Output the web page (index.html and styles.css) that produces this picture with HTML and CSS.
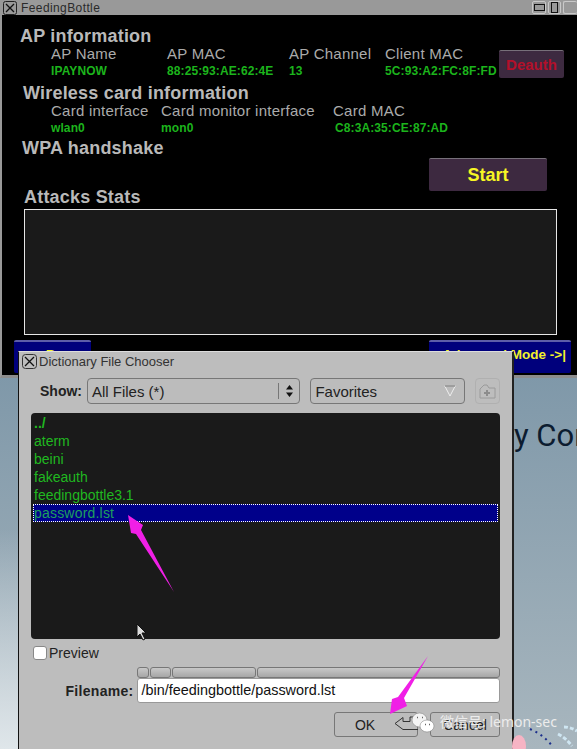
FILE: index.html
```html
<!DOCTYPE html>
<html lang="en">
<head>
    <meta charset="UTF-8">
    <meta name="viewport" content="width=device-width, initial-scale=1.0">
    <title>FeedingBottle</title>
    <link rel="stylesheet" href="styles.css">
</head>
<body>
    <div class="desktop">
        <div class="wallpaper-text">y Cor</div>

        <!-- Main window -->
        <div class="window main-window">
            <div class="titlebar">
                <svg class="close-icon" width="14" height="14" viewBox="0 0 14 14"><rect x="0.5" y="0.5" width="13" height="13" rx="2" fill="none" stroke="#222"/><path d="M3 3l8 8M11 3l-8 8" stroke="#111" stroke-width="1.3"/></svg>
                <span class="title-text">FeedingBottle</span>
                <div class="window-controls">
                    <span class="control"><i class="glyph-wide"></i></span>
                    <span class="control control-mid"><i class="glyph-tall"></i></span>
                    <span class="control control-cut"></span>
                </div>
            </div>
            <div class="main-body">
                <h2 class="heading heading-ap">AP information</h2>
                <div class="info-grid ap-grid">
                    <span class="label">AP Name</span>
                    <span class="label">AP MAC</span>
                    <span class="label">AP Channel</span>
                    <span class="label">Client MAC</span>
                    <span class="value">IPAYNOW</span>
                    <span class="value">88:25:93:AE:62:4E</span>
                    <span class="value">13</span>
                    <span class="value">5C:93:A2:FC:8F:FD</span>
                </div>
                <h2 class="heading heading-card">Wireless card information</h2>
                <div class="info-grid card-grid">
                    <span class="label">Card interface</span>
                    <span class="label">Card monitor interface</span>
                    <span class="label">Card MAC</span>
                    <span class="value">wlan0</span>
                    <span class="value">mon0</span>
                    <span class="value value-mac">C8:3A:35:CE:87:AD</span>
                </div>
                <h2 class="heading heading-wpa">WPA handshake</h2>
                <div class="start-row"><button class="btn-start">Start</button></div>
                <h2 class="heading heading-stats">Attacks Stats</h2>
                <div class="stats-box"></div>
                <div class="nav-row">
                    <button class="btn-nav btn-back">&lt;- Prev</button>
                    <button class="btn-nav btn-advanced">Advanced Mode -&gt;|</button>
                </div>
            </div>
            <button class="btn-deauth">Deauth</button>
        </div>

        <!-- File chooser dialog -->
        <div class="window dialog">
            <div class="dialog-title">
                <svg class="close-icon" width="15" height="15" viewBox="0 0 15 15"><rect x="0.5" y="0.5" width="14" height="14" rx="3" fill="none" stroke="#333"/><path d="M3 3l9 9M12 3l-9 9" stroke="#111" stroke-width="1.3"/></svg>
                <span>Dictionary File Chooser</span>
            </div>
            <div class="show-row">
                <label class="show-label">Show:</label>
                <div class="field select-files">
                    <span>All Files (*)</span>
                    <span class="spinner">
                        <svg width="9" height="14" viewBox="0 0 9 14"><path d="M4.5 1L8 5.500H1zM4.500 13L1 8.500h7z" fill="#111"/></svg>
                    </span>
                </div>
                <div class="field select-favorites">
                    <span>Favorites</span>
                    <svg width="12" height="12" viewBox="0 0 12 12"><path d="M0.800 1h10.400L6 11z" fill="none" stroke="#eee" stroke-width="1"/><path d="M1 1h10" stroke="#666"/></svg>
                </div>
                <div class="add-folder">
                    <svg width="17" height="15" viewBox="0 0 17 15"><path d="M1 14V5l4-4h3l2 3h6v10z" fill="none" stroke="#9a9a9a"/><path d="M5 9h6M8 6v6" stroke="#8c8c8c" stroke-width="2"/></svg>
                </div>
            </div>
            <ul class="file-list">
                <li class="parent">../</li>
                <li>aterm</li>
                <li>beini</li>
                <li>fakeauth</li>
                <li>feedingbottle3.1</li>
                <li class="selected">password.lst</li>
            </ul>
            <div class="preview-row">
                <span class="checkbox"></span>
                <span>Preview</span>
            </div>
            <div class="filename-row">
                <label class="filename-label">Filename:</label>
                <div class="filename-field">
                    <div class="path-buttons">
                        <span class="path-btn path-1"></span>
                        <span class="path-btn path-2"></span>
                        <span class="path-btn path-3"></span>
                        <span class="path-btn path-4"></span>
                    </div>
                    <div class="filename-input">/bin/feedingbottle/password.lst</div>
                </div>
            </div>
            <div class="button-row">
                <button class="btn-dialog btn-ok">OK
                    <svg class="return-icon" width="24" height="18" viewBox="0 0 24 18"><path d="M1 7.500L9 1.500V5.500H16V1H24M1 7.500L9 13.500H24" fill="none" stroke="#333"/></svg>
                </button>
                <button class="btn-dialog btn-cancel">Cancel</button>
            </div>
        </div>

        <!-- Annotations and corner artwork -->
        <svg class="overlay" width="577" height="749" viewBox="0 0 577 749">
            <path d="M128 515L143 525L141 530L174 592L136 534L131 533z" fill="#f01fe6"/>
            <path d="M428 656L404 698L407 706L390 714L392 699L398 697z" fill="#f01fe6"/>
            <path d="M137 624v13l3-3 3 6 2-1-3-6h4z" fill="#ddd" stroke="#111" stroke-width="1"/>
            <ellipse cx="519" cy="746" rx="7" ry="11" fill="#f6b4c4"/>
            <path d="M530 729q14 6 23 18" fill="none" stroke="#1c2f8c" stroke-width="2" stroke-dasharray="2 4"/>
            <path d="M558 734q8 4 14 12M564 727q6 0 13 4" fill="none" stroke="#cfe6f2" stroke-width="3" stroke-dasharray="4 2"/>
            <ellipse cx="419.500" cy="720" rx="7.500" ry="7" fill="#f4f4f4" stroke="#777" stroke-width="0.500"/>
            <ellipse cx="427" cy="726" rx="7" ry="6" fill="#fff" stroke="#777" stroke-width="0.500"/>
            <path d="M417 717.500h1M422 717.500h1M425 724.500h1M429 724.500h1" stroke="#666" stroke-width="1.500"/>
        </svg>
        <div class="watermark">微信号: lemon-sec</div>
    </div>
</body>
</html>
```

FILE: styles.css
```css
* {
    box-sizing: border-box;
}
body {
    margin: 0;
    font-family: "Liberation Sans", Arial, sans-serif;
}
button {
    font-family: inherit;
    padding: 0;
}
.desktop {
    position: relative;
    width: 577px;
    height: 749px;
    overflow: hidden;
    background: linear-gradient(180deg, #7f98a9 50%, #a8b6be 100%);
}
.desktop::before {
    content: "";
    position: absolute;
    left: 0;
    bottom: 0;
    width: 18px;
    height: 220px;
    background: linear-gradient(180deg, rgba(220, 230, 235, 0) 0%, #dfe6ea 100%);
}
.wallpaper-text {
    position: absolute;
    left: 514px;
    top: 416px;
    font-family: Roboto, sans-serif;
    font-size: 31px;
    line-height: 40px;
    color: #0c1c30;
    white-space: nowrap;
}
.window {
    position: absolute;
}

/* Main window */
.main-window {
    left: 0;
    top: 0;
    width: 577px;
    height: 378px;
    background: #000;
    border-left: 2px solid #999;
    border-bottom: 3px solid #8d8d8d;
}
.titlebar {
    display: flex;
    align-items: center;
    height: 15px;
    margin-left: -2px;
    padding-left: 3px;
    background: #999;
    color: #2a2a2a;
    font-size: 12px;
    letter-spacing: 0.4px;
}
.title-text {
    margin-left: 4px;
}
.window-controls {
    display: flex;
    gap: 2px;
    margin-left: auto;
}
.control {
    display: flex;
    align-items: center;
    justify-content: center;
    width: 14px;
    height: 13px;
    border: 1px solid #c9c9c9;
    border-radius: 2px;
}
.control-mid {
    width: 13px;
}
.control-cut {
    width: 14px;
    border-right: 0;
}
.glyph-wide {
    width: 11px;
    height: 7px;
    border: 1px solid #111;
}
.glyph-tall {
    width: 7px;
    height: 11px;
    border: 1px solid #111;
}
.main-body {
    padding: 11px 0 0 18px;
}
.heading {
    margin: 0;
    font-size: 18px;
    line-height: 20px;
    font-weight: bold;
    color: #b9b9b9;
    letter-spacing: 0.2px;
}
.heading-card {
    margin: 3px 0 0 3px;
}
.heading-wpa {
    margin: 2px 0 0 2px;
}
.heading-stats {
    margin: 0 0 0 4px;
}
.info-grid {
    display: grid;
    padding-left: 31px;
    grid-auto-rows: 18px;
    align-items: center;
}
.ap-grid {
    grid-template-columns: 116px 122px 96px auto;
    margin-top: -2px;
}
.card-grid {
    grid-template-columns: 110px 172px auto;
    grid-auto-rows: 17px;
    margin-top: -1px;
}
.label {
    font-size: 15px;
    letter-spacing: 0.25px;
    color: #ababab;
    white-space: nowrap;
}
.value {
    font-size: 12px;
    letter-spacing: 0.1px;
    font-weight: bold;
    color: #1cb41c;
    white-space: nowrap;
}
.value-mac {
    padding-left: 2px;
}
.start-row {
    display: flex;
    justify-content: flex-end;
    height: 29px;
    padding-right: 30px;
}
.btn-start {
    width: 118px;
    height: 33px;
    border: 0;
    border-top: 1px solid #77707a;
    border-radius: 2px;
    background: #3d2940;
    color: #f6f624;
    font-size: 18px;
    font-weight: bold;
}
.stats-box {
    width: 533px;
    height: 126px;
    margin: 2px 0 0 4px;
    border: 1px solid #e6e6e6;
    background: #1a1a1a;
}
.nav-row {
    display: flex;
    justify-content: space-between;
    margin: 5px 6px 0 -6px;
}
.btn-nav {
    height: 33px;
    padding-bottom: 6px;
    border: 0;
    border-top: 2px solid #5d5da8;
    border-radius: 2px;
    background: #00007c;
    color: #f2f22c;
    font-size: 14px;
    font-weight: bold;
}
.btn-back {
    width: 77px;
}
.btn-advanced {
    width: 142px;
    padding-right: 5px;
    text-align: right;
    font-size: 13.5px;
}
.btn-deauth {
    position: absolute;
    left: 497px;
    top: 50px;
    width: 65px;
    height: 28px;
    border: 0;
    border-top: 1px solid #77707a;
    border-radius: 2px;
    background: #3d2a40;
    color: #b4102a;
    font-size: 15px;
    font-weight: bold;
}

/* Dialog */
.dialog {
    left: 18px;
    top: 351px;
    width: 496px;
    height: 410px;
    background: #bdbdbd;
    border-left: 1px solid #111;
    border-right: 2px solid #222;
    border-top: 1px solid #ddd;
    padding: 0 12px;
    color: #222;
    font-size: 14px;
}
.dialog-title {
    display: flex;
    align-items: center;
    gap: 2px;
    height: 18px;
    margin: 0 -12px;
    padding-left: 3px;
    color: #333;
    font-size: 13px;
}
.show-row {
    display: flex;
    align-items: center;
    height: 26px;
    margin-top: 8px;
}
.show-label {
    width: 56px;
    padding-left: 9px;
    font-weight: bold;
}
.field {
    display: flex;
    align-items: center;
    justify-content: space-between;
    height: 26px;
    border: 1px solid #777;
    border-radius: 4px;
    background: #bcbcbc;
    padding-left: 4px;
    font-size: 15px;
}
.select-files {
    width: 214px;
}
.spinner {
    display: flex;
    align-items: center;
    justify-content: center;
    width: 21px;
    height: 16px;
    border-left: 1px solid #777;
}
.select-favorites {
    width: 155px;
    margin-left: 10px;
    padding-right: 8px;
}
.add-folder {
    display: flex;
    align-items: center;
    justify-content: center;
    width: 25px;
    height: 26px;
    margin-left: 10px;
    border: 1px solid #b0b0b0;
    border-radius: 4px;
}
.file-list {
    list-style: none;
    height: 226px;
    margin: 9px 0 0;
    padding: 1px 2px 0;
    background: #1a1a1a;
    border-radius: 4px;
    color: #20b820;
}
.file-list li {
    height: 18px;
    padding-left: 1px;
    line-height: 18px;
    font-size: 14px;
}
.file-list .parent {
    font-weight: bold;
}
.file-list .selected {
    background: #00008a;
    outline: 1px dotted #fff;
    outline-offset: -1px;
    color: #1e9f5e;
    letter-spacing: 0.2px;
}
.preview-row {
    display: flex;
    align-items: center;
    gap: 2px;
    height: 16px;
    margin: 6px 0 0 2px;
}
.checkbox {
    width: 14px;
    height: 14px;
    border: 1px solid #888;
    border-radius: 3px;
    background: #fff;
}
.filename-row {
    display: flex;
    align-items: flex-end;
    margin-top: 6px;
}
.filename-label {
    width: 103px;
    height: 24px;
    line-height: 24px;
    text-align: right;
    font-weight: bold;
    letter-spacing: 0.3px;
}
.filename-field {
    width: 365px;
    margin-left: 3px;
}
.path-buttons {
    display: flex;
    gap: 1px;
    height: 11px;
}
.path-btn {
    border: 1px solid #777;
    border-radius: 3px;
    background: linear-gradient(#c8c8c8, #a6a6a6);
}
.path-1 {
    width: 12px;
}
.path-2 {
    width: 21px;
}
.path-3 {
    width: 84px;
}
.path-4 {
    flex: 1;
}
.filename-input {
    height: 25px;
    padding-left: 4px;
    border: 1px solid #999;
    border-radius: 3px;
    background: #fff;
    color: #111;
    font-size: 14.4px;
    line-height: 23px;
}
.button-row {
    display: flex;
    justify-content: flex-end;
    gap: 12px;
    margin-top: 9px;
}
.btn-dialog {
    position: relative;
    height: 25px;
    border: 1px solid #777;
    border-radius: 3px;
    background: #bcbcbc;
    color: #222;
    font-size: 14px;
}
.btn-ok {
    width: 84px;
    padding-right: 22px;
}
.return-icon {
    position: absolute;
    right: -1px;
    top: 3px;
}
.btn-cancel {
    width: 70px;
}

/* Overlays */
.overlay {
    position: absolute;
    left: 0;
    top: 0;
}
.watermark {
    position: absolute;
    left: 440px;
    top: 713px;
    font-family: "Noto Sans", "Noto Sans CJK SC", sans-serif;
    font-size: 14px;
    line-height: 18px;
    color: #ececec;
    white-space: nowrap;
}
```
